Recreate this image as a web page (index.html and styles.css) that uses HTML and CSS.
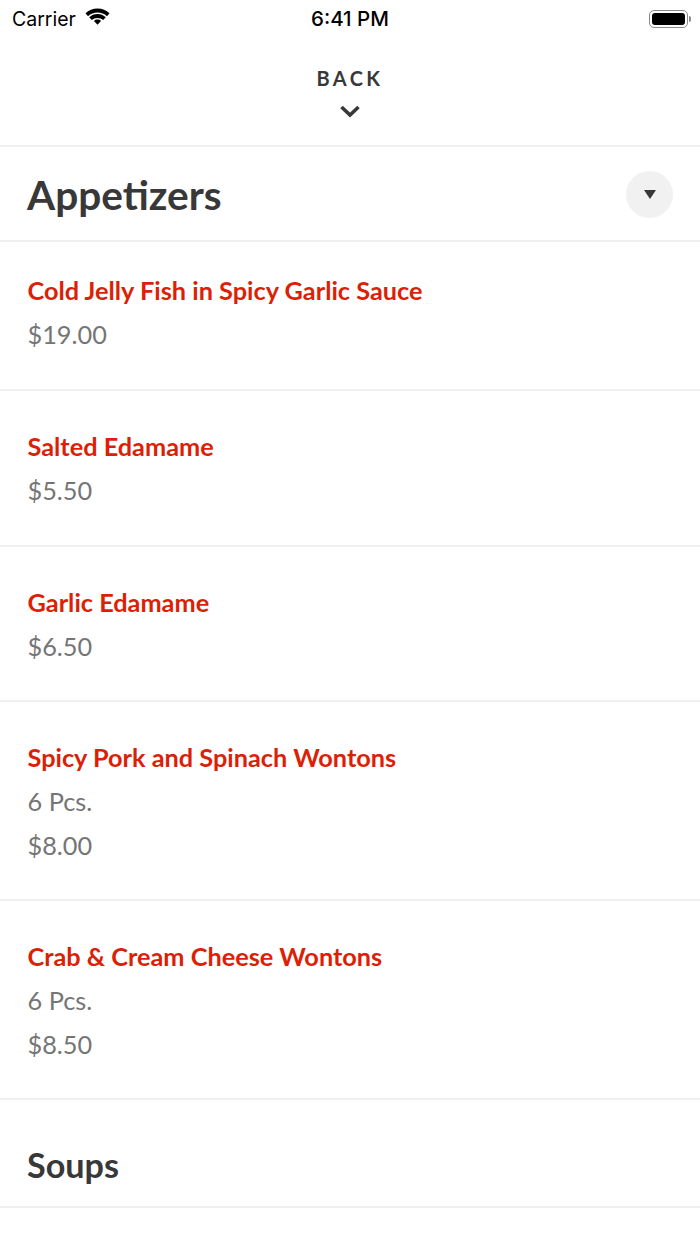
FILE: index.html
```html
<!DOCTYPE html>
<html lang="en">
<head>
  <meta charset="UTF-8">
  <meta name="viewport" content="width=device-width, initial-scale=1.0">
  <title>Menu</title>
  <link rel="stylesheet" href="styles.css">
</head>
<body>
  <div class="status-bar">
    <div class="status-left">
      <span>Carrier</span>
      <svg class="wifi" width="27" height="20" viewBox="0 0 26 19">
        <path d="M13 4.200c3.500 0 6.700 1.300 9.100 3.500l2.500-2.700C21.500 2.100 17.500.4 13 .4S4.500 2.100 1.400 5l2.500 2.700C6.300 5.500 9.500 4.200 13 4.200z"/>
        <path d="M13 9.400c2.100 0 4 .8 5.500 2.100l2.500-2.700C18.900 6.900 16.100 5.700 13 5.700S7.100 6.900 5 8.800l2.500 2.700c1.500-1.300 3.400-2.100 5.500-2.100z"/>
        <path d="M13 11c-1.300 0-2.500.5-3.400 1.300L13 16l3.400-3.700c-.9-.8-2.100-1.300-3.400-1.300z"/>
      </svg>
    </div>
    <div class="status-time">6:41 PM</div>
    <div class="status-right">
      <div class="battery"><div class="battery-fill"></div></div>
      <div class="battery-cap"></div>
    </div>
  </div>

  <div class="back">
    <div class="back-label">BACK</div>
    <svg class="back-icon" width="22" height="14" viewBox="0 0 22 14">
      <path d="M2.500 3l8.500 8 8.500-8" fill="none" stroke="#383838" stroke-width="3.600"/>
    </svg>
  </div>

  <div class="section-head">
    <h1 class="section-title">Appetizers</h1>
    <div class="toggle"><div class="caret"></div></div>
  </div>

  <div class="item first">
    <div class="item-name">Cold Jelly Fish in Spicy Garlic Sauce</div>
    <div class="item-info">$19.00</div>
  </div>
  <div class="item">
    <div class="item-name">Salted Edamame</div>
    <div class="item-info">$5.50</div>
  </div>
  <div class="item">
    <div class="item-name">Garlic Edamame</div>
    <div class="item-info">$6.50</div>
  </div>
  <div class="item">
    <div class="item-name">Spicy Pork and Spinach Wontons</div>
    <div class="item-info">6 Pcs.</div>
    <div class="item-info">$8.00</div>
  </div>
  <div class="item">
    <div class="item-name">Crab &amp; Cream Cheese Wontons</div>
    <div class="item-info">6 Pcs.</div>
    <div class="item-info">$8.50</div>
  </div>

  <div class="section-collapsed">
    <h2 class="section-small">Soups</h2>
  </div>
</body>
</html>
```

FILE: styles.css
```css
body {
  margin: 0;
  background: #fff;
  font-family: 'Lato', sans-serif;
  overflow: hidden;
}
.status-bar {
  height: 37px;
  display: flex;
  align-items: center;
  justify-content: space-between;
  padding: 0 9px 0 12px;
  font-family: 'Inter', sans-serif;
  font-size: 19.500px;
  color: #000;
  position: relative;
}
.status-left {
  display: flex;
  align-items: center;
  gap: 8px;
}
.wifi {
  margin-top: -2px;
}
.status-time {
  position: absolute;
  left: 0;
  right: 0;
  text-align: center;
  font-size: 20.500px;
  font-weight: 500;
}
.status-right {
  display: flex;
  align-items: center;
  gap: 1px;
}
.battery {
  width: 39px;
  height: 18px;
  box-sizing: border-box;
  border: 1.5px solid #8a8a8a;
  border-radius: 5px;
  padding: 2px;
}
.battery-fill {
  height: 100%;
  background: #000;
  border-radius: 3px;
}
.battery-cap {
  width: 2px;
  height: 6px;
  background: #8a8a8a;
  border-radius: 0 2px 2px 0;
}
.back {
  height: 110px;
  box-sizing: border-box;
  border-bottom: 2px solid #f0f0f0;
  text-align: center;
  padding-top: 29px;
}
.back-label {
  font-size: 20px;
  font-weight: 700;
  line-height: 24px;
  letter-spacing: 3.400px;
  color: #383838;
}
.back-icon {
  display: block;
  margin: 14px auto 0;
}
.section-head {
  height: 95px;
  box-sizing: border-box;
  border-bottom: 2px solid #f0f0f0;
  display: flex;
  align-items: center;
  justify-content: space-between;
  padding: 0 27px;
}
.section-title {
  margin: 2px 0 0;
  font-size: 40.600px;
  font-weight: 700;
  color: #383838;
}
.toggle {
  width: 47px;
  height: 47px;
  margin-top: 1px;
  border-radius: 50%;
  background: #f1f1f1;
  display: flex;
  align-items: center;
  justify-content: center;
}
.caret {
  width: 0;
  height: 0;
  margin-top: 1px;
  border-left: 6px solid transparent;
  border-right: 6px solid transparent;
  border-top: 9px solid #383838;
}
.item {
  box-sizing: border-box;
  border-bottom: 2px solid #f0f0f0;
  padding: 33px 27.500px 31.800px;
}
.item.first {
  padding-top: 26px;
  padding-bottom: 32.300px;
}
.item-name {
  font-size: 25.300px;
  font-weight: 700;
  line-height: 45px;
  color: #dc1f06;
}
.item-info {
  font-size: 25.300px;
  line-height: 43.700px;
  color: #757575;
}
.section-collapsed {
  height: 108px;
  box-sizing: border-box;
  border-bottom: 2px solid #f0f0f0;
  display: flex;
  align-items: center;
  padding: 22px 27px 0;
}
.section-small {
  margin: 0;
  font-size: 34.200px;
  font-weight: 700;
  color: #383838;
}
```
